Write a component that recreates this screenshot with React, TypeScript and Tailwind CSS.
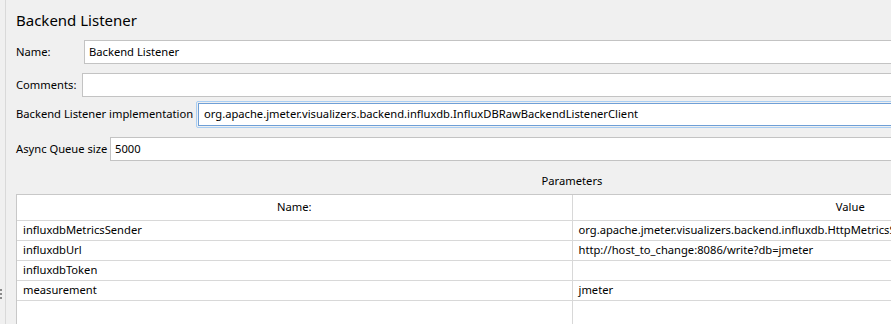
import React from "react";

const params = [
  { name: "influxdbMetricsSender", value: "org.apache.jmeter.visualizers.backend.influxdb.HttpMetricsSender" },
  { name: "influxdbUrl", value: "http://host_to_change:8086/write?db=jmeter" },
  { name: "influxdbToken", value: "" },
  { name: "measurement", value: "jmeter" },
];

function Field({ value, className }: { value: string; className: string }) {
  return (
    <div
      className={`h-full bg-white border border-[#c3c3c3] flex items-center pl-[4px] whitespace-nowrap ${className}`}
    >
      {value}
    </div>
  );
}

export default function App() {
  return (
    <div
      className="relative w-[891px] h-[324px] overflow-hidden bg-[#f0f0f0] text-[11.2px] text-black flex"
      style={{ fontFamily: '"Noto Sans", "Open Sans", sans-serif' }}
    >
      {/* splitter edge */}
      <div className="w-[6px] shrink-0 border-r border-[#d9d9d9]" />
      <div className="absolute left-0 top-[289px] flex flex-col gap-[2px]">
        <div className="w-[2px] h-[2px] bg-[#8a8a8a]" />
        <div className="w-[2px] h-[2px] bg-[#8a8a8a]" />
        <div className="w-[2px] h-[2px] bg-[#8a8a8a]" />
      </div>

      <div className="flex-1 flex flex-col pl-[10px] pt-[8px] min-w-0 whitespace-nowrap">
        <div className="h-[24px] leading-[24px] text-[15px] mb-[8px]">Backend Listener</div>

        <div className="flex items-center h-[24px]">
          <span className="w-[68px] shrink-0">Name:</span>
          <Field value="Backend Listener" className="w-[1100px] shrink-0" />
        </div>

        <div className="flex items-center h-[24px] mt-[9px]">
          <span className="w-[66px] shrink-0">Comments:</span>
          <Field value="" className="w-[1100px] shrink-0" />
        </div>

        <div className="flex items-center h-[27px] mt-[4px]">
          <span className="w-[180px] shrink-0">Backend Listener implementation</span>
          <div className="h-full w-[1100px] shrink-0 rounded-[2px] border border-[#a9cef3] p-px">
            <div className="h-full bg-white border border-[#6f9fd6] flex items-center pl-[5px]">
              org.apache.jmeter.visualizers.backend.influxdb.InfluxDBRawBackendListenerClient
            </div>
          </div>
        </div>

        <div className="flex items-center h-[24px] mt-[9px]">
          <span className="w-[94px] shrink-0">Async Queue size</span>
          <Field value="5000" className="w-[1100px] shrink-0" />
        </div>

        <div className="w-[1112px] h-[33px] flex items-end justify-center pb-[4px]">Parameters</div>

        <div className="w-[1112px] flex-1 bg-white border-l border-t border-[#c8c8c8] flex flex-col">
          <div className="flex h-[26px] border-b border-[#d8d8d8]">
            <div className="w-[556px] flex items-center justify-center border-r border-[#d8d8d8]">Name:</div>
            <div className="w-[556px] flex items-center justify-center">Value</div>
          </div>
          {params.map((p) => (
            <div key={p.name} className="flex h-[20px] border-b border-[#d8d8d8]">
              <div className="w-[556px] flex items-center pl-[6px] border-r border-[#d8d8d8]">{p.name}</div>
              <div className="w-[556px] flex items-center pl-[6px]">{p.value}</div>
            </div>
          ))}
          <div className="flex flex-1">
            <div className="w-[556px] border-r border-[#d8d8d8]" />
          </div>
        </div>
      </div>
    </div>
  );
}
